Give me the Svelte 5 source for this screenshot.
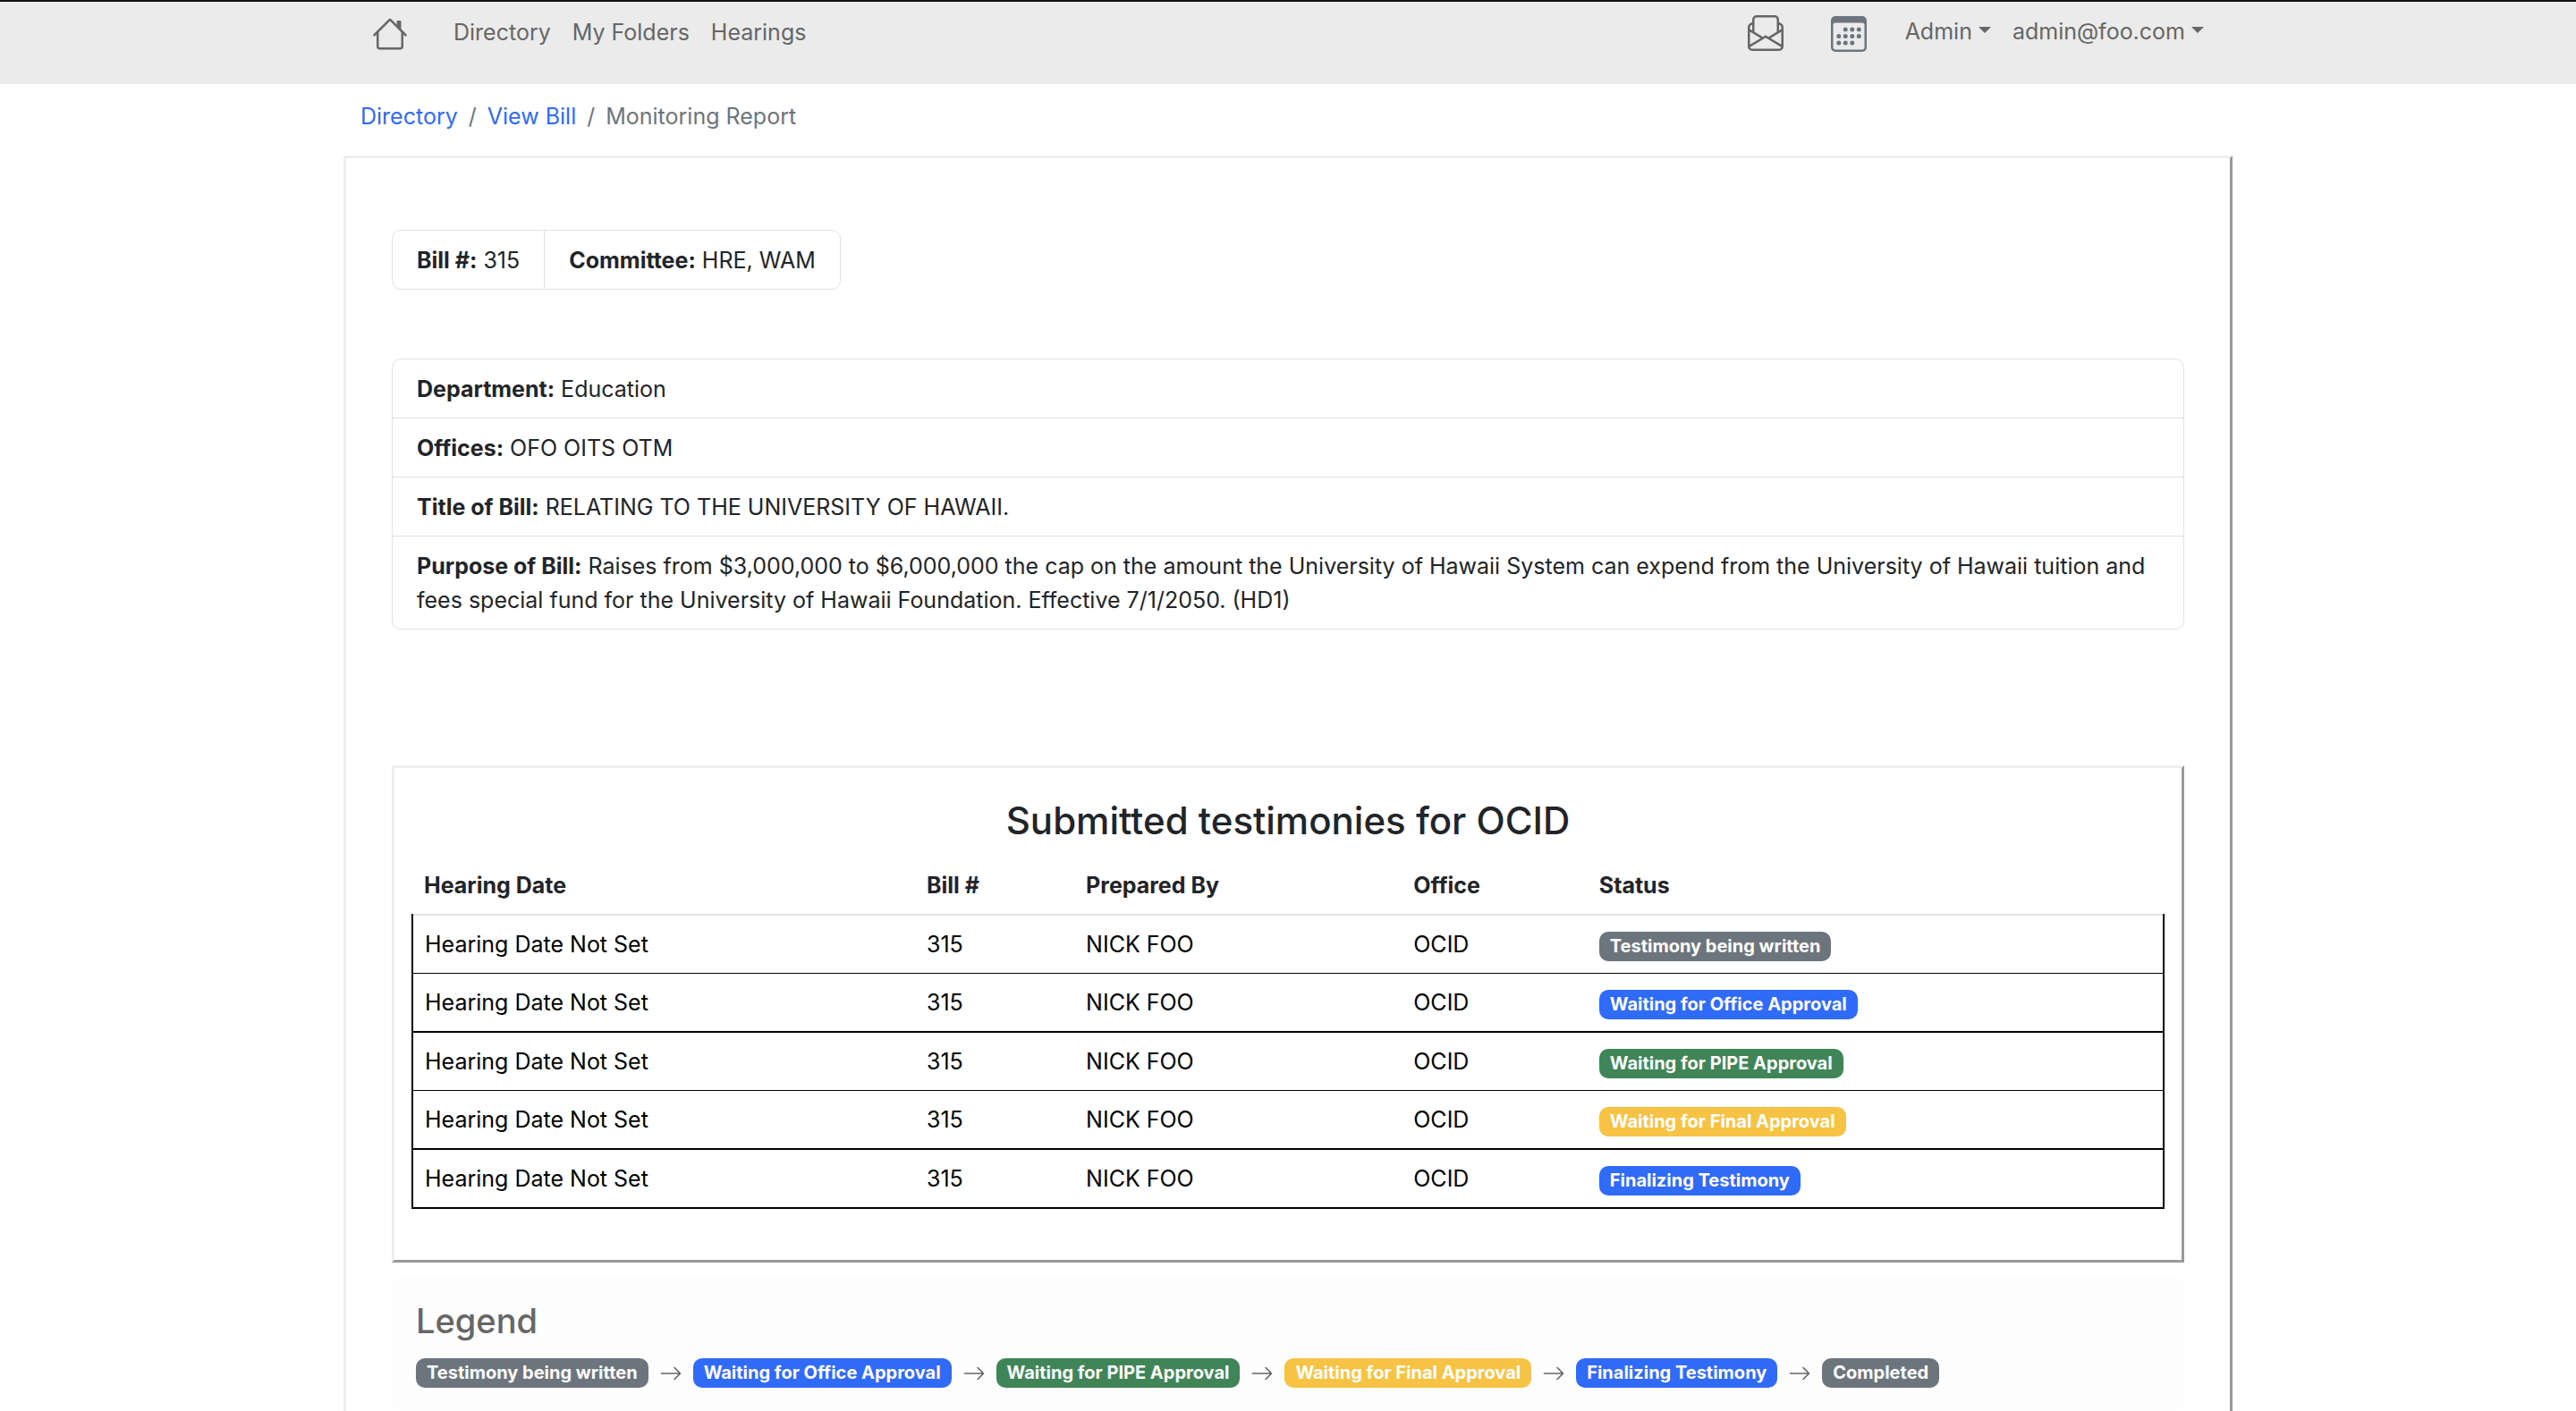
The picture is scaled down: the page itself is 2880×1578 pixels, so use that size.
<script>
  const navLinks = ['Directory', 'My Folders', 'Hearings'];
  const menus = ['Admin', 'admin@foo.com'];

  const details = [
    ['Department:', 'Education'],
    ['Offices:', 'OFO OITS OTM'],
    ['Title of Bill:', 'RELATING TO THE UNIVERSITY OF HAWAII.'],
    [
      'Purpose of Bill:',
      'Raises from $3,000,000 to $6,000,000 the cap on the amount the University of Hawaii System can expend from the University of Hawaii tuition and fees special fund for the University of Hawaii Foundation. Effective 7/1/2050. (HD1)'
    ]
  ];

  const statuses = [
    { label: 'Testimony being written', tone: 'gray' },
    { label: 'Waiting for Office Approval', tone: 'blue' },
    { label: 'Waiting for PIPE Approval', tone: 'green' },
    { label: 'Waiting for Final Approval', tone: 'yellow' },
    { label: 'Finalizing Testimony', tone: 'blue' },
    { label: 'Completed', tone: 'gray' }
  ];

  const testimonies = statuses.slice(0, 5).map((status) => ({
    date: 'Hearing Date Not Set',
    bill: '315',
    author: 'NICK FOO',
    office: 'OCID',
    status
  }));
</script>

{#snippet badge(status)}
  <span class="badge {status.tone}">{status.label}</span>
{/snippet}

<header class="topbar">
  <nav class="container nav" aria-label="Main">
    <a class="home" href="#home" aria-label="Home">
      <svg class="icon" viewBox="0 0 16 16" aria-hidden="true">
        <path fill-rule="evenodd" d="M2 13.5V7h1v6.5a.5.5 0 0 0 .5.5h9a.5.5 0 0 0 .5-.5V7h1v6.5a1.5 1.5 0 0 1-1.5 1.5h-9A1.5 1.5 0 0 1 2 13.5zm11-11V6l-2-2V2.5a.5.5 0 0 1 .5-.5h1a.5.5 0 0 1 .5.5z" />
        <path fill-rule="evenodd" d="M7.293 1.5a1 1 0 0 1 1.414 0l6.647 6.646a.5.5 0 0 1-.708.708L8 2.207 1.354 8.854a.5.5 0 1 1-.708-.708L7.293 1.5z" />
      </svg>
    </a>
    <div class="links">
      {#each navLinks as link}
        <a href="#{link}">{link}</a>
      {/each}
    </div>
    <div class="tools">
      <a class="tool" href="#inbox" aria-label="Inbox">
        <svg class="icon" viewBox="0 0 16 16" aria-hidden="true">
          <path d="M4 0a2 2 0 0 0-2 2v1.133l-.941.502A2 2 0 0 0 0 5.4V14a2 2 0 0 0 2 2h12a2 2 0 0 0 2-2V5.4a2 2 0 0 0-1.059-1.765L14 3.133V2a2 2 0 0 0-2-2H4Zm10 4.267.47.25A1 1 0 0 1 15 5.4v.817l-1 .6v-2.55Zm-1 3.15-3.75 2.25L8 8.917l-1.25.75L3 7.417V2a1 1 0 0 1 1-1h8a1 1 0 0 1 1 1v5.417Zm-11-.6-1-.6V5.4a1 1 0 0 1 .53-.882L2 4.267v2.55Zm13 .566v5.734l-4.778-2.867L15 7.383Zm-.035 6.88A1 1 0 0 1 14 15H2a1 1 0 0 1-.965-.738L8 10.083l6.965 4.18ZM1 13.116V7.383l4.778 2.867L1 13.117Z" />
        </svg>
      </a>
      <a class="tool calendar" href="#calendar" aria-label="Calendar">
        <svg class="icon" viewBox="0 0 16 16" aria-hidden="true">
          <path d="M14 0H2a2 2 0 0 0-2 2v12a2 2 0 0 0 2 2h12a2 2 0 0 0 2-2V2a2 2 0 0 0-2-2zM1 3.857C1 3.384 1.448 3 2 3h12c.552 0 1 .384 1 .857v10.286c0 .473-.448.857-1 .857H2c-.552 0-1-.384-1-.857V3.857z" />
          <path d="M6.5 7a1 1 0 1 0 0-2 1 1 0 0 0 0 2zm3 0a1 1 0 1 0 0-2 1 1 0 0 0 0 2zm3 0a1 1 0 1 0 0-2 1 1 0 0 0 0 2zm-9 3a1 1 0 1 0 0-2 1 1 0 0 0 0 2zm3 0a1 1 0 1 0 0-2 1 1 0 0 0 0 2zm3 0a1 1 0 1 0 0-2 1 1 0 0 0 0 2zm3 0a1 1 0 1 0 0-2 1 1 0 0 0 0 2zm-9 3a1 1 0 1 0 0-2 1 1 0 0 0 0 2zm3 0a1 1 0 1 0 0-2 1 1 0 0 0 0 2zm3 0a1 1 0 1 0 0-2 1 1 0 0 0 0 2z" />
        </svg>
      </a>
      {#each menus as menu}
        <button type="button" class="menu" aria-haspopup="true">{menu}<span class="caret"></span></button>
      {/each}
    </div>
  </nav>
</header>

<main class="container">
  <nav aria-label="Breadcrumb">
    <ol class="crumbs">
      <li><a href="#directory">Directory</a></li>
      <li><a href="#bill">View Bill</a></li>
      <li aria-current="page">Monitoring Report</li>
    </ol>
  </nav>

  <div class="sheet">
    <ul class="group summary">
      <li><strong>Bill #:</strong> 315</li>
      <li><strong>Committee:</strong> HRE, WAM</li>
    </ul>

    <ul class="group details">
      {#each details as [label, value]}
        <li><strong>{label}</strong> {value}</li>
      {/each}
    </ul>

    <section class="panel">
      <h2>Submitted testimonies for OCID</h2>
      <table>
        <colgroup>
          <col class="c-date" />
          <col class="c-bill" />
          <col class="c-author" />
          <col class="c-office" />
          <col />
        </colgroup>
        <thead>
          <tr>
            <th scope="col">Hearing Date</th>
            <th scope="col">Bill #</th>
            <th scope="col">Prepared By</th>
            <th scope="col">Office</th>
            <th scope="col">Status</th>
          </tr>
        </thead>
        <tbody>
          {#each testimonies as row}
            <tr>
              <td>{row.date}</td>
              <td>{row.bill}</td>
              <td>{row.author}</td>
              <td>{row.office}</td>
              <td>{@render badge(row.status)}</td>
            </tr>
          {/each}
        </tbody>
      </table>
    </section>

    <section class="legend">
      <h3>Legend</h3>
      <div class="flow">
        {#each statuses as status, i}
          {#if i > 0}
            <svg class="arrow" viewBox="0 0 16 16" aria-hidden="true">
              <path fill-rule="evenodd" d="M1 8a.5.5 0 0 1 .5-.5h11.793l-3.147-3.146a.5.5 0 0 1 .708-.708l4 4a.5.5 0 0 1 0 .708l-4 4a.5.5 0 0 1-.708-.708L13.293 8.5H1.5A.5.5 0 0 1 1 8z" />
            </svg>
          {/if}
          {@render badge(status)}
        {/each}
      </div>
    </section>
  </div>
</main>

<style>
  :global(body) {
    margin: 0;
    background: #fff;
    color: #212529;
    font: 400 25px/38px Inter, 'Liberation Sans', sans-serif;
  }

  a {
    text-decoration: none;
  }

  ul,
  ol {
    list-style: none;
    margin: 0;
    padding: 0;
  }

  strong {
    font-weight: 700;
  }

  .container {
    box-sizing: border-box;
    width: 100%;
    max-width: 2112px;
    margin: 0 auto;
  }

  .topbar {
    border-top: 2px solid #111;
    background: #ebebeb;
    color: #666;
  }

  .topbar a {
    color: inherit;
  }

  .nav {
    display: flex;
    align-items: flex-start;
    padding: 14px 32px 36px;
  }

  .home {
    display: flex;
    padding-top: 2px;
  }

  .links {
    display: flex;
    gap: 24px;
    margin-left: 51px;
    padding-top: 1px;
  }

  .tools {
    display: flex;
    align-items: flex-start;
    margin-left: auto;
  }

  .tool {
    display: flex;
    padding-top: 1px;
    margin-right: 53px;
  }

  .topbar .calendar {
    color: #6c757d;
    padding-top: 2px;
    margin-right: 43px;
  }

  .icon {
    width: 40px;
    height: 40px;
    fill: currentColor;
  }

  .menu {
    display: flex;
    align-items: center;
    gap: 7px;
    padding: 0;
    border: 0;
    background: none;
    color: inherit;
    font: inherit;
  }

  .menu + .menu {
    margin-left: 24px;
  }

  .caret {
    border: 7px solid transparent;
    border-top-color: currentColor;
    border-bottom: 0;
    margin-bottom: 4px;
  }

  .crumbs {
    display: flex;
    padding: 17px 19px 0;
    color: #6c757d;
  }

  .crumbs a {
    color: #2f6bf6;
  }

  .crumbs li + li::before {
    content: '/';
    padding: 0 12px;
  }

  .sheet {
    margin-top: 25px;
    padding: 80px 51px;
    border: 3px solid;
    border-color: #eee #999 #999 #eee;
  }

  .group {
    border: 1px solid #dee2e6;
    border-radius: 10px;
  }

  .group li {
    padding: 14px 27px 13px;
  }

  .summary {
    display: flex;
    width: fit-content;
  }

  .summary li + li {
    border-left: 1px solid #dee2e6;
  }

  .details {
    margin-top: 77px;
  }

  .details li + li {
    border-top: 1px solid #dee2e6;
  }

  .panel {
    margin-top: 152px;
    padding: 32px 19px 57px;
    border: 3px solid;
    border-color: #eee #999 #999 #eee;
  }

  h2 {
    margin: 0 0 13px;
    font-size: 42px;
    font-weight: 500;
    line-height: 54px;
    text-align: center;
  }

  table {
    width: 100%;
    table-layout: fixed;
    border-collapse: collapse;
    color: #000;
  }

  .c-date {
    width: 28.7%;
  }

  .c-bill {
    width: 9.1%;
  }

  .c-author {
    width: 18.7%;
  }

  .c-office {
    width: 10.6%;
  }

  th,
  td {
    padding: 13px;
    text-align: left;
  }

  th {
    color: #212529;
    font-weight: 700;
  }

  thead {
    border-bottom: 2px solid #dee2e6;
  }

  tbody tr {
    border: 2px solid #000;
    border-top: 0;
  }

  tbody tr:nth-child(odd) {
    border-bottom-width: 1px;
  }

  tbody tr:last-child {
    border-bottom-width: 2px;
  }

  .badge {
    display: inline-block;
    padding: 7px 12px;
    border-radius: 10px;
    color: #fff;
    font-size: 20px;
    font-weight: 700;
    line-height: 19px;
    white-space: nowrap;
  }

  .gray {
    background: #6c757d;
  }

  .blue {
    background: #2f6bf6;
  }

  .green {
    background: #408558;
  }

  .yellow {
    background: #f6c344;
  }

  .legend {
    margin-top: 16px;
    padding: 26px 27px;
    border-radius: 10px;
    background: #fdfdfd;
    color: #666;
  }

  h3 {
    margin: 0 0 19px;
    font-size: 38px;
    font-weight: 500;
    line-height: 46px;
  }

  .flow {
    display: flex;
    align-items: center;
    gap: 12px;
  }

  .arrow {
    flex: none;
    width: 26px;
    height: 26px;
    fill: currentColor;
  }
</style>
